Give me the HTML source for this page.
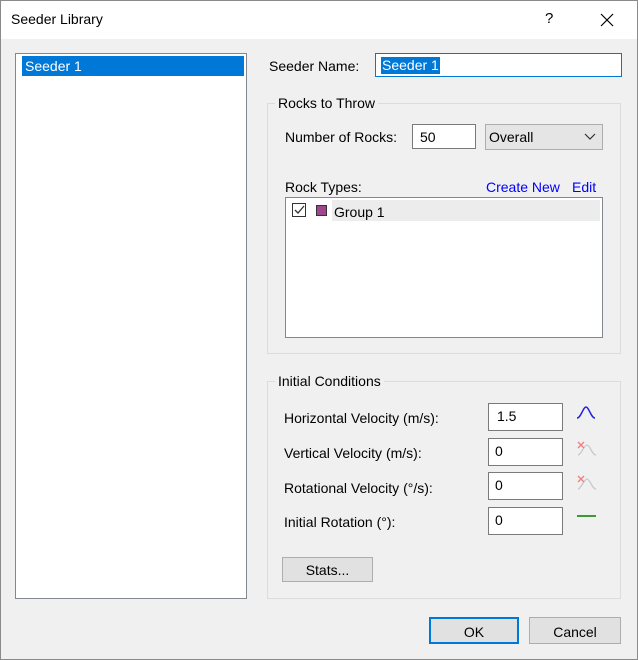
<!DOCTYPE html>
<html><head><meta charset="utf-8"><style>
*{box-sizing:border-box;margin:0;padding:0}
body{width:638px;height:660px;background:#f0f0f0;font-family:"Liberation Sans",sans-serif;font-size:14px;color:#000;position:relative;overflow:hidden}
.a{position:absolute}
.win{left:0;top:0;width:638px;height:660px;border:1px solid #8a8a8a}
.title{left:1px;top:1px;width:636px;height:38px;background:#fff}
.inp{background:#fff;border:1px solid #7a7a7a}
.grp{border:1px solid #dcdcdc}
.leg{background:#f0f0f0;padding:0 3px}
.btn{background:#e1e1e1;border:1px solid #adadad;text-align:center}
.lnk{color:#0000ff}
</style></head><body>
<div class="a win"></div>
<div class="a title"></div>
<div class="a" style="left:11px;top:11px;font-size:14px">Seeder Library</div>
<div class="a" style="left:545px;top:10px;font-size:15px">?</div>
<svg class="a" style="left:600px;top:13px" width="14" height="14"><path d="M1 1L13 13M13 1L1 13" stroke="#000" stroke-width="1.2"/></svg>

<div class="a inp" style="left:15px;top:53px;width:232px;height:546px;border-color:#828790"></div>
<div class="a" style="left:22px;top:56px;width:222px;height:20px;background:#0078d7;color:#fff;padding:2px 0 0 3px">Seeder 1</div>

<div class="a" style="left:269px;top:58px">Seeder Name:</div>
<div class="a inp" style="left:375px;top:53px;width:247px;height:24px;border-color:#0078d7"></div>
<div class="a" style="left:381px;top:57px;background:#0078d7;color:#fff;height:17px;padding:0 1px;line-height:17px">Seeder 1</div>

<div class="a grp" style="left:267px;top:103px;width:354px;height:251px"></div>
<div class="a leg" style="left:275px;top:95px">Rocks to Throw</div>
<div class="a" style="left:285px;top:129px">Number of Rocks:</div>
<div class="a inp" style="left:412px;top:124px;width:64px;height:25px;padding:4px 0 0 7px">50</div>
<div class="a" style="left:485px;top:124px;width:118px;height:26px;background:#e5e5e5;border:1px solid #adadad;padding:4px 0 0 3px">Overall</div>
<svg class="a" style="left:584px;top:133px" width="12" height="8"><path d="M1 1L6 6L11 1" stroke="#333" fill="none" stroke-width="1.2"/></svg>
<div class="a" style="left:285px;top:179px">Rock Types:</div>
<div class="a lnk" style="left:486px;top:179px">Create New</div>
<div class="a lnk" style="left:572px;top:179px">Edit</div>
<div class="a inp" style="left:285px;top:197px;width:318px;height:141px;border-color:#828790"></div>
<div class="a" style="left:332px;top:200px;width:268px;height:21px;background:#ececec"></div>
<div class="a" style="left:292px;top:203px;width:14px;height:14px;border:1px solid #333;background:#fff"></div>
<svg class="a" style="left:293px;top:204px" width="12" height="12"><path d="M2 6L5 9L11 2" stroke="#333" fill="none" stroke-width="1.3"/></svg>
<div class="a" style="left:316px;top:205px;width:11px;height:11px;background:#a0468c;border:1px solid #333"></div>
<div class="a" style="left:334px;top:204px">Group 1</div>

<div class="a grp" style="left:267px;top:381px;width:354px;height:218px"></div>
<div class="a leg" style="left:275px;top:373px">Initial Conditions</div>
<div class="a" style="left:284px;top:410px">Horizontal Velocity (m/s):</div>
<div class="a" style="left:284px;top:445px">Vertical Velocity (m/s):</div>
<div class="a" style="left:284px;top:480px">Rotational Velocity (°/s):</div>
<div class="a" style="left:284px;top:514px">Initial Rotation (°):</div>
<div class="a inp" style="left:488px;top:403px;width:75px;height:28px;padding:4px 0 0 8px">1.5</div>
<div class="a inp" style="left:488px;top:438px;width:75px;height:28px;padding:4px 0 0 6px">0</div>
<div class="a inp" style="left:488px;top:472px;width:75px;height:28px;padding:4px 0 0 6px">0</div>
<div class="a inp" style="left:488px;top:507px;width:75px;height:28px;padding:4px 0 0 6px">0</div>
<svg class="a" style="left:575px;top:405px" width="24" height="16"><path d="M2 13C6 13 8 2 11 2C14 2 16 13 20 13" stroke="#2020e0" fill="none" stroke-width="1.5"/></svg>
<svg class="a" style="left:575px;top:439px" width="24" height="18"><path d="M3 16C6 16 9 6 12 6C15 6 17 16 21 16" stroke="#c8c8d0" fill="none" stroke-width="1.3"/><path d="M3 3L9 9M9 3L3 9" stroke="#f08080" stroke-width="1.4"/></svg>
<svg class="a" style="left:575px;top:473px" width="24" height="18"><path d="M3 16C6 16 9 6 12 6C15 6 17 16 21 16" stroke="#c8c8d0" fill="none" stroke-width="1.3"/><path d="M3 3L9 9M9 3L3 9" stroke="#f08080" stroke-width="1.4"/></svg>
<div class="a" style="left:577px;top:515px;width:19px;height:2px;background:#3a9a3a"></div>
<div class="a btn" style="left:282px;top:557px;width:91px;height:25px;padding-top:4px">Stats...</div>

<div class="a btn" style="left:429px;top:617px;width:90px;height:27px;border:2px solid #0078d7;padding-top:5px">OK</div>
<div class="a btn" style="left:529px;top:617px;width:92px;height:27px;padding-top:6px">Cancel</div>
</body></html>
